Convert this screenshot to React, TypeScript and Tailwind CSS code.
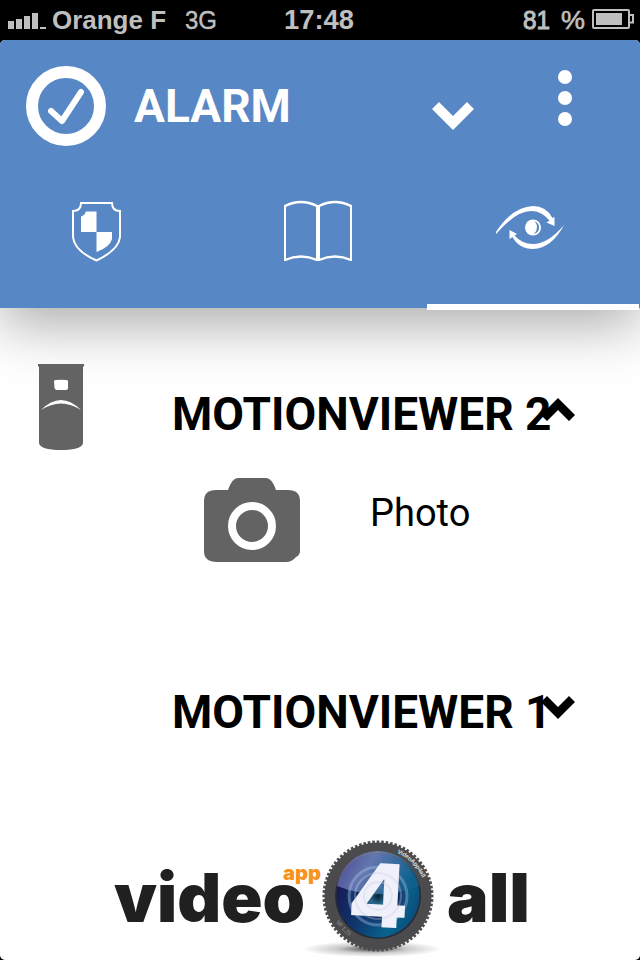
import { useState } from "react";

const viewers = [
  { id: "mv2", name: "MOTIONVIEWER 2", open: true },
  { id: "mv1", name: "MOTIONVIEWER 1", open: false },
];

const teeth = Array.from({ length: 76 }, (_, i) => i * (360 / 76));

export default function App() {
  return (
    <div className="flex h-[960px] w-[640px] flex-col overflow-hidden bg-black font-['Roboto',sans-serif]">
      <StatusBar />
      <div className="flex flex-1 flex-col overflow-hidden rounded-[5px] bg-white">
        <Header />
        <ViewerList />
        <Logo />
      </div>
    </div>
  );
}

function StatusBar() {
  return (
    <div className="flex h-10 shrink-0 items-center bg-black font-['Liberation_Sans',sans-serif] text-[26px] leading-10 text-[#bfbfbf]">
      <div className="flex w-[45px] shrink-0 items-end gap-[2px] pt-[1px] pl-2">
        <span className="h-2 w-[6px] shrink-0 bg-[#bfbfbf]" />
        <span className="h-[10px] w-[6px] shrink-0 bg-[#bfbfbf]" />
        <span className="h-[13px] w-[6px] shrink-0 bg-[#bfbfbf]" />
        <span className="h-4 w-[6px] shrink-0 bg-[#bfbfbf]" />
        <span className="h-[2px] w-[6px] shrink-0 bg-[#bfbfbf]" />
      </div>
      <svg className="h-10 w-[185px] shrink-0" viewBox="45 0 185 40">
        <text x="52" y="29" fontSize="26" fontWeight="700" fill="#bfbfbf" textLength="114" lengthAdjust="spacingAndGlyphs">Orange F</text>
        <text x="185" y="29" fontSize="25" fill="#bfbfbf" stroke="#bfbfbf" strokeWidth="0.4" textLength="32" lengthAdjust="spacingAndGlyphs">3G</text>
      </svg>
      <svg className="h-10 w-[360px] shrink-0" viewBox="230 0 360 40">
        <text x="284" y="29" fontSize="27" fontWeight="700" fill="#bfbfbf" textLength="70" lengthAdjust="spacingAndGlyphs">17:48</text>
        <text x="523" y="29" fontSize="26" fill="#bfbfbf" stroke="#bfbfbf" strokeWidth="1" textLength="27" lengthAdjust="spacingAndGlyphs">81</text>
        <text x="561" y="29" fontSize="26" fill="#bfbfbf" stroke="#bfbfbf" strokeWidth="0.6" textLength="24" lengthAdjust="spacingAndGlyphs">%</text>
      </svg>
      <svg className="h-10 w-[50px] shrink-0" viewBox="590 0 50 40">
        <rect x="593" y="10" width="36" height="18" rx="1" fill="none" stroke="#bfbfbf" strokeWidth="2" />
        <rect x="596" y="13" width="26" height="12" fill="#bfbfbf" />
        <path d="M630 15H633V22.500H630" fill="none" stroke="#bfbfbf" strokeWidth="2" />
      </svg>
    </div>
  );
}

function Header() {
  const [tab, setTab] = useState(2);

  return (
    <header className="flex h-[268px] shrink-0 flex-col bg-[#5887c5] text-white shadow-[0_16px_54px_rgba(0,0,0,0.34)]">
      <div className="flex h-[130px] shrink-0 items-center pl-[26px]">
        <svg className="mt-[2px] h-20 w-20 shrink-0" viewBox="0 0 80 80" fill="none" stroke="currentColor">
          <circle cx="40" cy="40" r="34" strokeWidth="12" />
          <path d="M25 45L36 55L55 26" strokeWidth="6" strokeLinecap="round" strokeLinejoin="round" />
        </svg>
        <h1 className="mt-[2px] ml-[28px] w-[298px] text-[46px] leading-none font-bold">ALARM</h1>
        <svg className="mt-[21px] h-7 w-[42px] shrink-0" viewBox="0 0 42 28" fill="currentColor">
          <path d="M7 0L21 14L35 0L42 7L21 28L0 7Z" />
        </svg>
        <div className="mb-[15px] ml-[84px] flex flex-col gap-[7px]">
          <span className="size-[14px] rounded-full bg-white" />
          <span className="size-[14px] rounded-full bg-white" />
          <span className="size-[14px] rounded-full bg-white" />
        </div>
      </div>
      <nav className="grid h-[138px] shrink-0 grid-cols-[213px_214px_212px]">
        {[ShieldIcon, BookIcon, EyeIcon].map((Icon, i) => (
          <button key={i} onClick={() => setTab(i)} className="flex flex-col items-center justify-between">
            <Icon />
            <span className={tab === i ? "-mb-[2px] h-[6px] w-full bg-white" : "-mb-[2px] h-[6px] w-full"} />
          </button>
        ))}
      </nav>
    </header>
  );
}

function ShieldIcon() {
  return (
    <svg className="mt-[30px] mr-[21px] h-16 w-14" viewBox="68 202 56 64">
      <path d="M81 205H112C112 210 115 213 120 213V239C119 250 108 257 96.500 262.500C84 257 74 250 73 239V213C78 213 81 210 81 205Z" fill="none" stroke="#fff" strokeWidth="2" />
      <path d="M86 213.500H96.500V234H81V218.500Q84 218 86 213.500ZM96.500 234H112V241Q110 249 96.500 254Z" fill="#fff" />
    </svg>
  );
}

function BookIcon() {
  return (
    <svg className="mt-[30px] mr-[5px] h-16 w-[72px]" viewBox="282 200 72 64" fill="none" stroke="#fff">
      <path d="M285 206Q301 198 317 206M319 206Q335 198 351 206M285 260Q301 253 317 260M319 260Q335 253 351 260" strokeWidth="2.400" />
      <path d="M285 205V261M351 205V261" strokeWidth="2" />
      <path d="M318 205V261" strokeWidth="4" />
    </svg>
  );
}

function EyeIcon() {
  return (
    <svg className="mt-[30px] mr-[6px] h-14 w-[72px]" viewBox="494 200 72 56">
      <path d="M496 232Q512 207 533 206Q546 206 552.500 218L554.500 217V226L546.500 222.500L549.500 220.500Q542 211 531 211Q516 211 496 234Z" fill="#fff" />
      <path d="M564 225Q552 248 533 249Q519 249 512.500 237L509.500 239V230L517 234L514.500 235.500Q522 244 533 244Q548 244 564 225Z" fill="#fff" />
      <circle cx="533" cy="227.500" r="8" fill="#fff" />
      <path d="M534 221Q540 223 539 229Q538 233 534 234Q537 231 537 227Q537 223 534 221Z" fill="#5887c5" />
    </svg>
  );
}

function ViewerList() {
  const [items, setItems] = useState(viewers);

  const toggle = (id: string) =>
    setItems(items.map((v) => (v.id === id ? { ...v, open: !v.open } : v)));

  return (
    <main className="flex flex-1 flex-col pt-[56px]">
      {items.map((v) => (
        <section key={v.id} className={v.open ? "h-[298px]" : "h-[100px]"}>
          <button onClick={() => toggle(v.id)} className="flex h-[100px] w-full items-center text-left">
            <div className="w-[172px] shrink-0 pl-[38px]">{v.open && <DetectorIcon />}</div>
            <h2 className="w-[369px] shrink-0 text-[46px] leading-none font-bold whitespace-nowrap text-black">{v.name}</h2>
            <svg className="mb-[9px] h-[23px] w-[34px] shrink-0" viewBox="0 0 34 23">
              <path d={v.open ? "M17 0L34 17L28 23L17 12L6 23L0 17Z" : "M6 0L17 11L28 0L34 6L17 23L0 6Z"} fill="#000" />
            </svg>
          </button>
          {v.open && (
            <div className="flex items-start pt-[13px] pl-[204px]">
              <CameraIcon />
              <span className="mt-[12px] ml-[70px] text-[38px] leading-[49px] text-black">Photo</span>
            </div>
          )}
        </section>
      ))}
    </main>
  );
}

function DetectorIcon() {
  return (
    <svg className="mb-[14px] h-[86px] w-[46px]" viewBox="38 364 46 86">
      <path d="M38 364H84V366L83 367V443Q82 450 61 450Q40 450 39 443V367L38 366Z" fill="#636363" />
      <path d="M54 381Q54 380 56 380Q61 379.500 66 380Q68 380 68 381V388Q68 390 66 390H57Q55 390 54.500 388Z" fill="#fff" />
      <path d="M41 410Q51 400 61 400Q71 400 81 410Q71 403.500 61 403.500Q51 403.500 41 410Z" fill="#fff" />
    </svg>
  );
}

function CameraIcon() {
  return (
    <svg className="h-[85px] w-24 shrink-0" viewBox="0 0 96 85">
      <path d="M24 13Q28 1 34 1H62Q68 1 72 13H84Q96 13 96 24V74Q96 78 92 80Q88 85 82 85H13Q0 85 0 74V24Q0 13 12 13Z" fill="#636363" />
      <circle cx="48" cy="49" r="20" fill="none" stroke="#fff" strokeWidth="8" />
    </svg>
  );
}

function Logo() {
  return (
    <footer className="flex h-[130px] shrink-0 justify-center">
      <svg className="h-[130px] w-[640px]" viewBox="0 830 640 130">
        <defs>
          <radialGradient id="floor">
            <stop offset="0" stopColor="#000" stopOpacity="0.7" />
            <stop offset="0.5" stopColor="#000" stopOpacity="0.2" />
            <stop offset="1" stopColor="#000" stopOpacity="0" />
          </radialGradient>
          <linearGradient id="lens" x1="0" y1="0.3" x2="1" y2="0.7">
            <stop offset="0" stopColor="#191650" />
            <stop offset="0.4" stopColor="#10386f" />
            <stop offset="0.75" stopColor="#07648f" />
            <stop offset="1" stopColor="#0b4a76" />
          </linearGradient>
          <radialGradient id="iris">
            <stop offset="0" stopColor="#04202f" />
            <stop offset="0.3" stopColor="#2d6f94" />
            <stop offset="0.6" stopColor="#0a1746" />
            <stop offset="1" stopColor="#1a4f8c" stopOpacity="0.5" />
          </radialGradient>
          <linearGradient id="glare" x1="0" y1="0" x2="1" y2="0.3">
            <stop offset="0" stopColor="#5c55a8" />
            <stop offset="0.45" stopColor="#7c8fc8" />
            <stop offset="1" stopColor="#12618e" />
          </linearGradient>
        </defs>
        <ellipse cx="372" cy="949" rx="70" ry="8" fill="url(#floor)" />
        <g stroke="#4b4b4d" strokeWidth="2.600">
          {teeth.map((a) => (
            <path key={a} d="M378 840.500V846" transform={`rotate(${a} 378 896)`} />
          ))}
        </g>
        <circle cx="378" cy="896" r="53.500" fill="#4b4b4d" />
        <circle cx="378" cy="896" r="43" fill="#272a34" />
        <circle cx="378" cy="896" r="41.500" fill="url(#lens)" />
        <circle cx="378" cy="896" r="30" fill="url(#iris)" />
        <path d="M337 886A41.500 41.500 0 0 1 419 886Q378 902 337 886Z" fill="url(#glare)" opacity="0.75" />
        <circle cx="378" cy="896" r="29" fill="none" stroke="#b7c8e6" strokeWidth="3" opacity="0.35" />
        <text x="348" y="927" fontFamily="Inter, sans-serif" fontWeight="800" fontSize="88" fill="#eff0fa" textLength="61" lengthAdjust="spacingAndGlyphs" transform="rotate(3 378 896)">4</text>
        <circle cx="378" cy="896" r="23" fill="none" stroke="#c9cfe5" strokeWidth="2" opacity="0.35" />
        <circle cx="378" cy="896" r="14" fill="none" stroke="#c9cfe5" strokeWidth="2" opacity="0.35" />
        <path id="ring-top" d="M397 853A47.500 47.500 0 0 1 423 880" fill="none" />
        <path id="ring-bottom" d="M336 922A49 49 0 0 0 359 941" fill="none" />
        <text fontSize="6" fontWeight="700" fill="#ddd" fontFamily="Liberation Sans, sans-serif">
          <textPath href="#ring-top" textLength="36">VideoApp4all</textPath>
        </text>
        <text fontSize="5.500" fill="#999" fontFamily="Liberation Sans, sans-serif">
          <textPath href="#ring-bottom">VF 1.25</textPath>
        </text>
        <g fontFamily="Inter, sans-serif" fontWeight="900">
          <text x="114" y="922" fontSize="67" fill="#202020" textLength="191" lengthAdjust="spacingAndGlyphs">video</text>
          <text x="447" y="922" fontSize="67" fill="#202020" textLength="83" lengthAdjust="spacingAndGlyphs">all</text>
          <text x="283" y="880" fontSize="20" fill="#f7941e" textLength="38" lengthAdjust="spacingAndGlyphs">app</text>
        </g>
      </svg>
    </footer>
  );
}
